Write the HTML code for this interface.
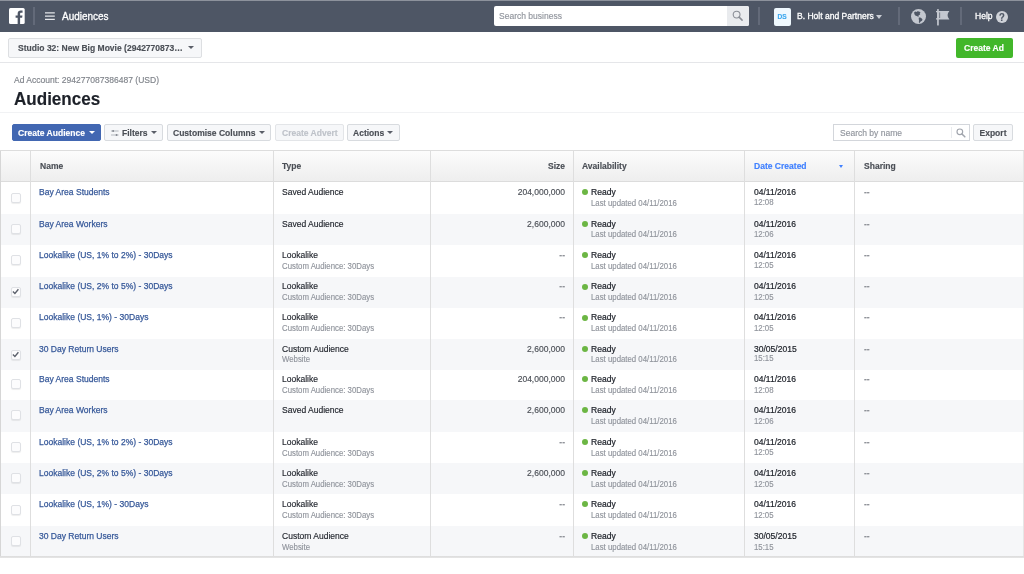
<!DOCTYPE html><html lang="en"><head><meta charset="utf-8"><title>Audiences</title><style>
*{margin:0;padding:0;box-sizing:border-box}
html,body{width:1024px;height:574px;overflow:hidden;background:#fff}
body{position:relative;will-change:transform;font-family:"Liberation Sans",Arial,sans-serif;color:#1d2129}
body *{position:absolute}
.t{-webkit-text-stroke:.15px;white-space:nowrap;line-height:12px;transform:scaleX(.947);transform-origin:0 50%}
.top{left:0;top:0;width:1024px;height:32px;background:#4e5665}
.top:before{content:"";position:absolute;left:0;top:0;width:1024px;height:1px;background:#8d929c}
.dv{width:2px;background:#636a79;top:7px;height:18px}
.bar2{left:0;top:32px;width:1024px;height:31px;background:#fff;border-bottom:1px solid #e5e6e9}
.btn{height:17px;top:124px;background:#f6f7f9;border:1px solid #d8dbdf;border-radius:2px}
.arr{width:0;height:0;border-left:3px solid transparent;border-right:3px solid transparent;border-top:3.5px solid #5a5e68}
.hd{left:0;top:150px;width:1024px;height:32px;border-top:1px solid #dddddd;border-bottom:1px solid #dcdcdc;background:linear-gradient(#fcfcfc,#eeeeee)}
.row{left:0;width:1024px;background:#fff}
.row.alt{background:#f6f7f9}
.dot{left:582px;width:6px;height:6px;border-radius:50%;background:#6cb644}
.cb{left:11px;width:10px;height:10px;border:1px solid #dfe1e5;border-radius:2px;background:#fcfcfd;box-shadow:0 1px 1px rgba(0,0,0,.07)}
.cb svg{left:-1px;top:-1px}
.vl{top:151px;width:1px;height:405px;background:#dedede}
.tend{left:0;top:556px;width:1024px;height:2px;background:linear-gradient(#dcdcdc,#e6e6e6)}

</style></head><body>
<div class="top">
<svg style="left:8.700px;top:8px" width="16" height="16" viewBox="0 0 16 16"><rect width="15.700" height="16" rx="1.500" fill="#fff"/><path d="M11.1 16V9.8h2.05l.3-2.4H11.1V5.9c0-.7.2-1.15 1.2-1.15h1.25V2.6c-.2-.03-.95-.1-1.8-.1-1.85 0-3.1 1.1-3.1 3.15V7.4H6.6v2.4h2.05V16z" fill="#4e5665"/></svg>
<div class="dv" style="left:33px"></div>
<svg style="left:45px;top:12px" width="10" height="9" viewBox="0 0 10 9"><path d="M0 .9h9.800M0 4.150h9.800M0 7.400h9.800" stroke="#e4e6ea" stroke-width="1.400"/></svg>
<span class="t" style="top:10px;font-size:10.5px;left:61.5px;color:#fff;-webkit-text-stroke:.3px #fff;">Audiences</span>
<div style="left:494px;top:5.5px;width:255px;height:20px;background:#fff;border-radius:2px;overflow:hidden"><div style="right:0;top:0;width:22.5px;height:20px;background:#e9ebee"></div>
<svg style="left:238px;top:4.5px" width="12" height="12" viewBox="0 0 12 12"><circle cx="4.6" cy="4.6" r="3.4" fill="none" stroke="#8a8e96" stroke-width="1.1"/><path d="M7.100 7.100L10.100 10.100" stroke="#8a8e96" stroke-width="1.500" stroke-linecap="round"/></svg></div>
<span class="t" style="top:10px;font-size:9px;left:499px;color:#90949c;">Search business</span>
<div class="dv" style="left:758px"></div>
<div style="left:773.5px;top:8px;width:17px;height:17.5px;background:#eff8fe;border-radius:2px"></div>
<span class="t" style="top:11px;font-size:7px;left:682px;width:200px;text-align:center;transform-origin:50% 50%;color:#3ba7ef;font-weight:bold;">DS</span>
<span class="t" style="top:10px;font-size:9px;left:796.5px;color:#fff;-webkit-text-stroke:.3px #fff;">B. Holt and Partners</span>
<i class="arr" style="left:876.3px;top:14.5px;border-top-color:#c9cdd4;border-left-width:3.2px;border-right-width:3.2px;border-top-width:4.2px"></i>
<div class="dv" style="left:898px"></div>
<svg style="left:911.1px;top:9.2px" width="15" height="15" viewBox="0 0 15 15"><circle cx="7.5" cy="7.5" r="7.5" fill="#c3c7cf"/><path d="M3.2 3.300L4.300 2.400 5.600 2.900 6.300 2.300 8.200 2.400 9.600 3.800 8.700 4.600 9.200 5.400 8.100 5.900 7.500 6.400 7.700 7.800 6.600 7.500 5.800 7 4.700 6.700 3.700 5.700 3.200 4.300z" fill="#4e5665"/><path d="M7.800 8.500L9.200 8.400 10.500 9.300 11.500 10.400 11 11.800 9.700 12.500 8.900 13.600 8 14.300 7.900 12.700 8 11.200 7.700 9.900z" fill="#4e5665"/></svg>
<svg style="left:935.9px;top:8.6px" width="15" height="17" viewBox="0 0 15 17"><rect x="1.1" y="0" width="1.700" height="16.500" rx=".6" fill="#c3c7cf"/><path d="M0 2h13.4Q9.6 6.3 13.4 10.6H0v-1.300h1v-6H0z" fill="#c3c7cf"/><rect x="3.400" y="3.400" width=".7" height="5.600" fill="#4e5665"/></svg>
<div class="dv" style="left:960px"></div>
<span class="t" style="top:10px;font-size:9px;left:974.5px;color:#fff;-webkit-text-stroke:.3px #fff;">Help</span>
<div style="left:995.5px;top:10.5px;width:12.5px;height:12.5px;border-radius:50%;background:#cfd2d8"></div>
<span class="t" style="top:12px;font-size:10px;left:901.8px;width:200px;text-align:center;transform-origin:50% 50%;color:#4e5665;font-weight:bold;">?</span>
</div>
<div class="bar2"></div>
<div style="left:8px;top:37.5px;width:193.5px;height:20px;background:#f6f7f9;border:1px solid #dddfe2;border-radius:2px"></div>
<span class="t" style="top:42px;font-size:9px;left:17.5px;color:#4b4f56;font-weight:bold;">Studio 32: New Big Movie (2942770873…</span>
<i class="arr" style="left:187.700px;top:46.200px"></i>
<div style="left:956px;top:37.5px;width:56.500px;height:20px;background:#42b72a;border-radius:2px"></div>
<span class="t" style="top:42px;font-size:9px;left:884.4px;width:200px;text-align:center;transform-origin:50% 50%;color:#fff;font-weight:bold;">Create Ad</span>
<span class="t" style="top:74px;font-size:9px;left:14px;color:#7f838a;">Ad Account: 294277087386487 (USD)</span>
<span class="t" style="top:93px;font-size:18px;left:13.6px;color:#1d2129;font-weight:bold;">Audiences</span>
<div style="left:0;top:112px;width:1024px;height:1px;background:#f1f2f4"></div>
<div class="btn" style="left:12px;width:89px;background:#4267b2;border-color:#4267b2"></div>
<span class="t" style="top:127px;font-size:9px;left:18px;color:#fff;font-weight:bold;">Create Audience</span>
<i class="arr" style="left:88.700px;top:131px;border-top-color:#fff"></i>
<div class="btn" style="left:104px;width:59px"></div>
<svg style="left:110.8px;top:128.5px" width="8" height="8" viewBox="0 0 8 8"><path d="M0 2h7.6M0 6h7.6" stroke="#9a9ea6" stroke-width=".7"/><rect x="1.4" y="1" width="1.5" height="2" fill="#8a8e96"/><rect x="4.8" y="5" width="1.5" height="2" fill="#8a8e96"/></svg>
<span class="t" style="top:127px;font-size:9px;left:122px;color:#4b4f56;font-weight:bold;">Filters</span>
<i class="arr" style="left:150.500px;top:131px"></i>
<div class="btn" style="left:166.500px;width:104.500px"></div>
<span class="t" style="top:127px;font-size:9px;left:173px;color:#4b4f56;font-weight:bold;">Customise Columns</span>
<i class="arr" style="left:258.500px;top:131px"></i>
<div class="btn" style="left:275px;width:69px;border-color:#e3e5e8"></div>
<span class="t" style="top:127px;font-size:9px;left:281.5px;color:#bec2c9;font-weight:bold;">Create Advert</span>
<div class="btn" style="left:346.500px;width:53.500px"></div>
<span class="t" style="top:127px;font-size:9px;left:353.4px;color:#4b4f56;font-weight:bold;">Actions</span>
<i class="arr" style="left:387.300px;top:131px"></i>
<div style="left:833px;top:124px;width:137px;height:17px;border:1px solid #d3d6db;background:#fff"><div style="left:117px;top:2px;width:1px;height:11px;background:#e9ebee"></div><svg style="left:122px;top:2.500px" width="10" height="10" viewBox="0 0 12 12"><circle cx="4.600" cy="4.600" r="3.400" fill="none" stroke="#a1a5ad" stroke-width="1.400"/><path d="M7.100 7.100L10.600 10.600" stroke="#a1a5ad" stroke-width="1.800" stroke-linecap="round"/></svg></div>
<span class="t" style="top:127px;font-size:9px;left:839.5px;color:#90949c;">Search by name</span>
<div class="btn" style="left:972.600px;width:40px"></div>
<span class="t" style="top:127px;font-size:9px;left:892.5px;width:200px;text-align:center;transform-origin:50% 50%;color:#4b4f56;font-weight:bold;">Export</span>
<div class="hd"></div>
<span class="t" style="top:160px;font-size:9px;left:39.6px;color:#4b4f56;font-weight:bold;">Name</span>
<span class="t" style="top:160px;font-size:9px;left:282px;color:#4b4f56;font-weight:bold;">Type</span>
<span class="t" style="top:160px;font-size:9px;right:459px;transform-origin:100% 50%;color:#4b4f56;font-weight:bold;">Size</span>
<span class="t" style="top:160px;font-size:9px;left:582.1px;color:#4b4f56;font-weight:bold;">Availability</span>
<span class="t" style="top:160px;font-size:9px;left:754px;color:#4080ff;font-weight:bold;">Date Created</span>
<i class="arr" style="left:839px;top:164.6px;border-top-color:#4080ff;border-left-width:2.8px;border-right-width:2.8px;border-top-width:3.3px"></i>
<span class="t" style="top:160px;font-size:9px;left:864px;color:#4b4f56;font-weight:bold;">Sharing</span>
<div class="row" style="top:182.0px;height:32.0px"></div>
<div class="row alt" style="top:214.0px;height:31.0px"></div>
<div class="row" style="top:245.0px;height:31.5px"></div>
<div class="row alt" style="top:276.5px;height:31.0px"></div>
<div class="row" style="top:307.5px;height:31.0px"></div>
<div class="row alt" style="top:338.5px;height:31.0px"></div>
<div class="row" style="top:369.5px;height:30.5px"></div>
<div class="row alt" style="top:400.0px;height:31.5px"></div>
<div class="row" style="top:431.5px;height:31.5px"></div>
<div class="row alt" style="top:463.0px;height:31.0px"></div>
<div class="row" style="top:494.0px;height:32.0px"></div>
<div class="row alt" style="top:526.0px;height:30.0px"></div>
<span class="cb" style="top:192.5px"></span>
<span class="t" style="top:186px;font-size:9px;left:39.4px;color:#365899;-webkit-text-stroke:.25px #365899;">Bay Area Students</span>
<span class="t" style="top:186px;font-size:9px;left:282px;color:#1d2129;">Saved Audience</span>
<span class="t" style="top:186px;font-size:9px;right:459px;transform-origin:100% 50%;color:#4b4f56;">204,000,000</span>
<i class="dot" style="top:189.3px"></i>
<span class="t" style="top:186px;font-size:9px;left:591px;color:#1d2129;-webkit-text-stroke:.22px #1d2129;">Ready</span>
<span class="t" style="top:198px;font-size:8.25px;left:591px;color:#90949c;">Last updated 04/11/2016</span>
<span class="t" style="top:186px;font-size:9px;left:754px;color:#1d2129;-webkit-text-stroke:.22px #1d2129;">04/11/2016</span>
<span class="t" style="top:197px;font-size:8.25px;left:754px;color:#90949c;">12:08</span>
<span class="t" style="top:186px;font-size:9px;left:864px;color:#8d9097;font-weight:bold;">--</span>
<span class="cb" style="top:223.9px"></span>
<span class="t" style="top:218px;font-size:9px;left:39.4px;color:#365899;-webkit-text-stroke:.25px #365899;">Bay Area Workers</span>
<span class="t" style="top:218px;font-size:9px;left:282px;color:#1d2129;">Saved Audience</span>
<span class="t" style="top:218px;font-size:9px;right:459px;transform-origin:100% 50%;color:#4b4f56;">2,600,000</span>
<i class="dot" style="top:220.7px"></i>
<span class="t" style="top:218px;font-size:9px;left:591px;color:#1d2129;-webkit-text-stroke:.22px #1d2129;">Ready</span>
<span class="t" style="top:229px;font-size:8.25px;left:591px;color:#90949c;">Last updated 04/11/2016</span>
<span class="t" style="top:218px;font-size:9px;left:754px;color:#1d2129;-webkit-text-stroke:.22px #1d2129;">04/11/2016</span>
<span class="t" style="top:229px;font-size:8.25px;left:754px;color:#90949c;">12:06</span>
<span class="t" style="top:218px;font-size:9px;left:864px;color:#8d9097;font-weight:bold;">--</span>
<span class="cb" style="top:255.3px"></span>
<span class="t" style="top:249px;font-size:9px;left:39.4px;color:#365899;-webkit-text-stroke:.25px #365899;">Lookalike (US, 1% to 2%) - 30Days</span>
<span class="t" style="top:249px;font-size:9px;left:282px;color:#1d2129;">Lookalike</span>
<span class="t" style="top:261px;font-size:8.25px;left:282px;color:#90949c;">Custom Audience: 30Days</span>
<span class="t" style="top:249px;font-size:9px;right:459px;transform-origin:100% 50%;color:#8d9097;font-weight:bold;">--</span>
<i class="dot" style="top:252.1px"></i>
<span class="t" style="top:249px;font-size:9px;left:591px;color:#1d2129;-webkit-text-stroke:.22px #1d2129;">Ready</span>
<span class="t" style="top:261px;font-size:8.25px;left:591px;color:#90949c;">Last updated 04/11/2016</span>
<span class="t" style="top:249px;font-size:9px;left:754px;color:#1d2129;-webkit-text-stroke:.22px #1d2129;">04/11/2016</span>
<span class="t" style="top:260px;font-size:8.25px;left:754px;color:#90949c;">12:05</span>
<span class="t" style="top:249px;font-size:9px;left:864px;color:#8d9097;font-weight:bold;">--</span>
<span class="cb" style="top:286.7px"><svg viewBox="0 0 10 10" width="10" height="10"><path d="M1.9 4.5 L3.9 6.4 L7.4 2.2" fill="none" stroke="#5b606b" stroke-width="1.35"/></svg></span>
<span class="t" style="top:280px;font-size:9px;left:39.4px;color:#365899;-webkit-text-stroke:.25px #365899;">Lookalike (US, 2% to 5%) - 30Days</span>
<span class="t" style="top:280px;font-size:9px;left:282px;color:#1d2129;">Lookalike</span>
<span class="t" style="top:292px;font-size:8.25px;left:282px;color:#90949c;">Custom Audience: 30Days</span>
<span class="t" style="top:280px;font-size:9px;right:459px;transform-origin:100% 50%;color:#8d9097;font-weight:bold;">--</span>
<i class="dot" style="top:283.5px"></i>
<span class="t" style="top:280px;font-size:9px;left:591px;color:#1d2129;-webkit-text-stroke:.22px #1d2129;">Ready</span>
<span class="t" style="top:292px;font-size:8.25px;left:591px;color:#90949c;">Last updated 04/11/2016</span>
<span class="t" style="top:280px;font-size:9px;left:754px;color:#1d2129;-webkit-text-stroke:.22px #1d2129;">04/11/2016</span>
<span class="t" style="top:292px;font-size:8.25px;left:754px;color:#90949c;">12:05</span>
<span class="t" style="top:280px;font-size:9px;left:864px;color:#8d9097;font-weight:bold;">--</span>
<span class="cb" style="top:318.1px"></span>
<span class="t" style="top:311px;font-size:9px;left:39.4px;color:#365899;-webkit-text-stroke:.25px #365899;">Lookalike (US, 1%) - 30Days</span>
<span class="t" style="top:311px;font-size:9px;left:282px;color:#1d2129;">Lookalike</span>
<span class="t" style="top:323px;font-size:8.25px;left:282px;color:#90949c;">Custom Audience: 30Days</span>
<span class="t" style="top:311px;font-size:9px;right:459px;transform-origin:100% 50%;color:#8d9097;font-weight:bold;">--</span>
<i class="dot" style="top:314.9px"></i>
<span class="t" style="top:311px;font-size:9px;left:591px;color:#1d2129;-webkit-text-stroke:.22px #1d2129;">Ready</span>
<span class="t" style="top:323px;font-size:8.25px;left:591px;color:#90949c;">Last updated 04/11/2016</span>
<span class="t" style="top:311px;font-size:9px;left:754px;color:#1d2129;-webkit-text-stroke:.22px #1d2129;">04/11/2016</span>
<span class="t" style="top:323px;font-size:8.25px;left:754px;color:#90949c;">12:05</span>
<span class="t" style="top:311px;font-size:9px;left:864px;color:#8d9097;font-weight:bold;">--</span>
<span class="cb" style="top:349.5px"><svg viewBox="0 0 10 10" width="10" height="10"><path d="M1.9 4.5 L3.9 6.4 L7.4 2.2" fill="none" stroke="#5b606b" stroke-width="1.35"/></svg></span>
<span class="t" style="top:343px;font-size:9px;left:39.4px;color:#365899;-webkit-text-stroke:.25px #365899;">30 Day Return Users</span>
<span class="t" style="top:343px;font-size:9px;left:282px;color:#1d2129;">Custom Audience</span>
<span class="t" style="top:354px;font-size:8.25px;left:282px;color:#90949c;">Website</span>
<span class="t" style="top:343px;font-size:9px;right:459px;transform-origin:100% 50%;color:#4b4f56;">2,600,000</span>
<i class="dot" style="top:346.3px"></i>
<span class="t" style="top:343px;font-size:9px;left:591px;color:#1d2129;-webkit-text-stroke:.22px #1d2129;">Ready</span>
<span class="t" style="top:354px;font-size:8.25px;left:591px;color:#90949c;">Last updated 04/11/2016</span>
<span class="t" style="top:343px;font-size:9px;left:754px;color:#1d2129;-webkit-text-stroke:.22px #1d2129;">30/05/2015</span>
<span class="t" style="top:353px;font-size:8.25px;left:754px;color:#90949c;">15:15</span>
<span class="t" style="top:343px;font-size:9px;left:864px;color:#8d9097;font-weight:bold;">--</span>
<span class="cb" style="top:379.0px"></span>
<span class="t" style="top:373px;font-size:9px;left:39.4px;color:#365899;-webkit-text-stroke:.25px #365899;">Bay Area Students</span>
<span class="t" style="top:373px;font-size:9px;left:282px;color:#1d2129;">Lookalike</span>
<span class="t" style="top:385px;font-size:8.25px;left:282px;color:#90949c;">Custom Audience: 30Days</span>
<span class="t" style="top:373px;font-size:9px;right:459px;transform-origin:100% 50%;color:#4b4f56;">204,000,000</span>
<i class="dot" style="top:375.8px"></i>
<span class="t" style="top:373px;font-size:9px;left:591px;color:#1d2129;-webkit-text-stroke:.22px #1d2129;">Ready</span>
<span class="t" style="top:385px;font-size:8.25px;left:591px;color:#90949c;">Last updated 04/11/2016</span>
<span class="t" style="top:373px;font-size:9px;left:754px;color:#1d2129;-webkit-text-stroke:.22px #1d2129;">04/11/2016</span>
<span class="t" style="top:385px;font-size:8.25px;left:754px;color:#90949c;">12:08</span>
<span class="t" style="top:373px;font-size:9px;left:864px;color:#8d9097;font-weight:bold;">--</span>
<span class="cb" style="top:410.4px"></span>
<span class="t" style="top:404px;font-size:9px;left:39.4px;color:#365899;-webkit-text-stroke:.25px #365899;">Bay Area Workers</span>
<span class="t" style="top:404px;font-size:9px;left:282px;color:#1d2129;">Saved Audience</span>
<span class="t" style="top:404px;font-size:9px;right:459px;transform-origin:100% 50%;color:#4b4f56;">2,600,000</span>
<i class="dot" style="top:407.2px"></i>
<span class="t" style="top:404px;font-size:9px;left:591px;color:#1d2129;-webkit-text-stroke:.22px #1d2129;">Ready</span>
<span class="t" style="top:416px;font-size:8.25px;left:591px;color:#90949c;">Last updated 04/11/2016</span>
<span class="t" style="top:404px;font-size:9px;left:754px;color:#1d2129;-webkit-text-stroke:.22px #1d2129;">04/11/2016</span>
<span class="t" style="top:416px;font-size:8.25px;left:754px;color:#90949c;">12:06</span>
<span class="t" style="top:404px;font-size:9px;left:864px;color:#8d9097;font-weight:bold;">--</span>
<span class="cb" style="top:441.8px"></span>
<span class="t" style="top:436px;font-size:9px;left:39.4px;color:#365899;-webkit-text-stroke:.25px #365899;">Lookalike (US, 1% to 2%) - 30Days</span>
<span class="t" style="top:436px;font-size:9px;left:282px;color:#1d2129;">Lookalike</span>
<span class="t" style="top:448px;font-size:8.25px;left:282px;color:#90949c;">Custom Audience: 30Days</span>
<span class="t" style="top:436px;font-size:9px;right:459px;transform-origin:100% 50%;color:#8d9097;font-weight:bold;">--</span>
<i class="dot" style="top:438.6px"></i>
<span class="t" style="top:436px;font-size:9px;left:591px;color:#1d2129;-webkit-text-stroke:.22px #1d2129;">Ready</span>
<span class="t" style="top:448px;font-size:8.25px;left:591px;color:#90949c;">Last updated 04/11/2016</span>
<span class="t" style="top:436px;font-size:9px;left:754px;color:#1d2129;-webkit-text-stroke:.22px #1d2129;">04/11/2016</span>
<span class="t" style="top:447px;font-size:8.25px;left:754px;color:#90949c;">12:05</span>
<span class="t" style="top:436px;font-size:9px;left:864px;color:#8d9097;font-weight:bold;">--</span>
<span class="cb" style="top:473.2px"></span>
<span class="t" style="top:467px;font-size:9px;left:39.4px;color:#365899;-webkit-text-stroke:.25px #365899;">Lookalike (US, 2% to 5%) - 30Days</span>
<span class="t" style="top:467px;font-size:9px;left:282px;color:#1d2129;">Lookalike</span>
<span class="t" style="top:479px;font-size:8.25px;left:282px;color:#90949c;">Custom Audience: 30Days</span>
<span class="t" style="top:467px;font-size:9px;right:459px;transform-origin:100% 50%;color:#4b4f56;">2,600,000</span>
<i class="dot" style="top:470.0px"></i>
<span class="t" style="top:467px;font-size:9px;left:591px;color:#1d2129;-webkit-text-stroke:.22px #1d2129;">Ready</span>
<span class="t" style="top:479px;font-size:8.25px;left:591px;color:#90949c;">Last updated 04/11/2016</span>
<span class="t" style="top:467px;font-size:9px;left:754px;color:#1d2129;-webkit-text-stroke:.22px #1d2129;">04/11/2016</span>
<span class="t" style="top:479px;font-size:8.25px;left:754px;color:#90949c;">12:05</span>
<span class="t" style="top:467px;font-size:9px;left:864px;color:#8d9097;font-weight:bold;">--</span>
<span class="cb" style="top:504.6px"></span>
<span class="t" style="top:498px;font-size:9px;left:39.4px;color:#365899;-webkit-text-stroke:.25px #365899;">Lookalike (US, 1%) - 30Days</span>
<span class="t" style="top:498px;font-size:9px;left:282px;color:#1d2129;">Lookalike</span>
<span class="t" style="top:510px;font-size:8.25px;left:282px;color:#90949c;">Custom Audience: 30Days</span>
<span class="t" style="top:498px;font-size:9px;right:459px;transform-origin:100% 50%;color:#8d9097;font-weight:bold;">--</span>
<i class="dot" style="top:501.4px"></i>
<span class="t" style="top:498px;font-size:9px;left:591px;color:#1d2129;-webkit-text-stroke:.22px #1d2129;">Ready</span>
<span class="t" style="top:510px;font-size:8.25px;left:591px;color:#90949c;">Last updated 04/11/2016</span>
<span class="t" style="top:498px;font-size:9px;left:754px;color:#1d2129;-webkit-text-stroke:.22px #1d2129;">04/11/2016</span>
<span class="t" style="top:510px;font-size:8.25px;left:754px;color:#90949c;">12:05</span>
<span class="t" style="top:498px;font-size:9px;left:864px;color:#8d9097;font-weight:bold;">--</span>
<span class="cb" style="top:536.0px"></span>
<span class="t" style="top:530px;font-size:9px;left:39.4px;color:#365899;-webkit-text-stroke:.25px #365899;">30 Day Return Users</span>
<span class="t" style="top:530px;font-size:9px;left:282px;color:#1d2129;">Custom Audience</span>
<span class="t" style="top:542px;font-size:8.25px;left:282px;color:#90949c;">Website</span>
<span class="t" style="top:530px;font-size:9px;right:459px;transform-origin:100% 50%;color:#8d9097;font-weight:bold;">--</span>
<i class="dot" style="top:532.8px"></i>
<span class="t" style="top:530px;font-size:9px;left:591px;color:#1d2129;-webkit-text-stroke:.22px #1d2129;">Ready</span>
<span class="t" style="top:542px;font-size:8.25px;left:591px;color:#90949c;">Last updated 04/11/2016</span>
<span class="t" style="top:530px;font-size:9px;left:754px;color:#1d2129;-webkit-text-stroke:.22px #1d2129;">30/05/2015</span>
<span class="t" style="top:542px;font-size:8.25px;left:754px;color:#90949c;">15:15</span>
<span class="t" style="top:530px;font-size:9px;left:864px;color:#8d9097;font-weight:bold;">--</span>
<div class="vl" style="left:30px"></div>
<div class="vl" style="left:273px"></div>
<div class="vl" style="left:430px"></div>
<div class="vl" style="left:573px"></div>
<div class="vl" style="left:744px"></div>
<div class="vl" style="left:854px"></div>
<div class="vl" style="left:0;background:#d6d6d6"></div><div class="vl" style="left:1023px;background:#e6e6e6"></div><div class="tend"></div>
</body></html>
